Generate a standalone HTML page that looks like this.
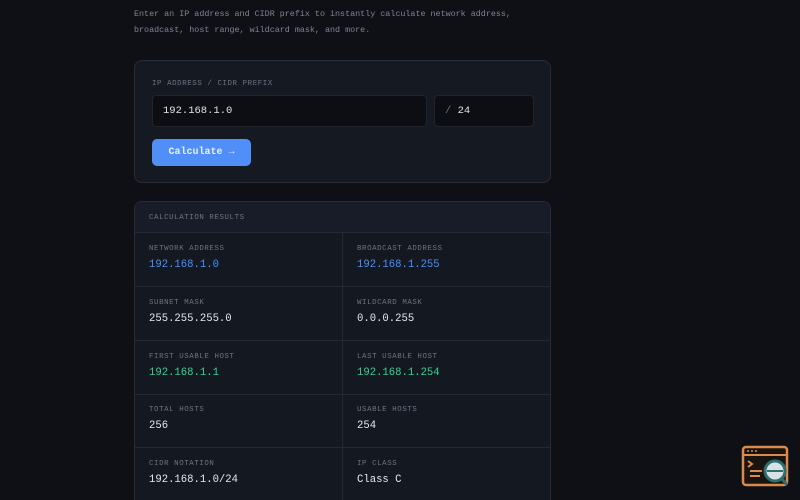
<!DOCTYPE html>
<html style="width:800px;height:500px;overflow:hidden"><head><style>
*{box-sizing:border-box;margin:0;padding:0}
body{width:800px;height:500px;overflow:hidden;background:#0e1016;font-family:"Liberation Mono",monospace;color:#e6e8ee;position:relative}
.desc{position:absolute;left:134px;top:7px;font-size:8.4px;line-height:15.5px;color:#7d8593}
.card{position:absolute;left:134px;top:60px;width:417px;height:123px;background:#151922;border:1px solid #272c37;border-radius:8px}
.lbl{font-size:7.4px;letter-spacing:0.6px;color:#6d7482;text-transform:uppercase}
.in{position:absolute;background:#0c0e13;border:1px solid #20242d;border-radius:4px;font-size:10.5px;color:#e0e3ea;padding-left:10px;line-height:30px;height:32px;top:34px}
.btn{position:absolute;left:17px;top:78px;width:99px;height:27px;background:#4f8ff7;border-radius:5px;color:#eaf1ff;font-size:10px;font-weight:bold;text-align:center;line-height:27px}
.res{position:absolute;left:134px;top:201px;width:417px;height:320px;background:#141820;border:1px solid #272c37;border-radius:8px;overflow:hidden}
.hd{height:31px;background:#171c28;border-bottom:1px solid #232834;padding:12px 0 0 14px}
.cell{position:absolute;width:208px;height:54px;border-bottom:1px solid #232834;padding:12px 0 0 14px}
.cell.r{left:207px;border-left:1px solid #232834}
.v{font-size:10.6px;margin-top:6px;color:#e6e8ee}
.b{color:#4f8ff7}.g{color:#3ccf95}
</style></head><body>
<div class="desc">Enter an IP address and CIDR prefix to instantly calculate network address,<br>broadcast, host range, wildcard mask, and more.</div>
<div class="card">
<div class="lbl" style="position:absolute;left:17px;top:19px">IP Address / CIDR Prefix</div>
<div class="in" style="left:17px;width:275px">192.168.1.0</div>
<div class="in" style="left:299px;width:100px"><span style="color:#6d7482">/</span> 24</div>
<div class="btn">Calculate →</div>
</div>
<div class="res">
<div class="hd lbl">Calculation Results</div>
<div class="cell" style="top:31px"><div class="lbl">Network Address</div><div class="v b">192.168.1.0</div></div>
<div class="cell r" style="top:31px"><div class="lbl">Broadcast Address</div><div class="v b">192.168.1.255</div></div>
<div class="cell" style="top:85px"><div class="lbl">Subnet Mask</div><div class="v">255.255.255.0</div></div>
<div class="cell r" style="top:85px"><div class="lbl">Wildcard Mask</div><div class="v">0.0.0.255</div></div>
<div class="cell" style="top:139px"><div class="lbl">First Usable Host</div><div class="v g">192.168.1.1</div></div>
<div class="cell r" style="top:139px"><div class="lbl">Last Usable Host</div><div class="v g">192.168.1.254</div></div>
<div class="cell" style="top:192px"><div class="lbl">Total Hosts</div><div class="v">256</div></div>
<div class="cell r" style="top:192px"><div class="lbl">Usable Hosts</div><div class="v">254</div></div>
<div class="cell" style="top:246px"><div class="lbl">CIDR Notation</div><div class="v">192.168.1.0/24</div></div>
<div class="cell r" style="top:246px"><div class="lbl">IP Class</div><div class="v">Class C</div></div>
</div>
<svg style="position:absolute;left:740px;top:444px" width="52" height="46" viewBox="0 0 52 46">
<rect x="3" y="3" width="44" height="38" rx="3" fill="#1a1410" stroke="#d98a4c" stroke-width="2.5"/>
<line x1="3" y1="11" x2="47" y2="11" stroke="#d98a4c" stroke-width="2"/>
<circle cx="8" cy="7" r="1" fill="#d98a4c"/><circle cx="12" cy="7" r="1" fill="#d98a4c"/><circle cx="16" cy="7" r="1" fill="#d98a4c"/>
<path d="M8 17l4 3-4 3M10 27h12M10 32h10" stroke="#d98a4c" stroke-width="2" fill="none"/>
<circle cx="35" cy="27" r="10" fill="#d8e2e6" stroke="#2c6f6e" stroke-width="3"/>
<line x1="27" y1="27" x2="43" y2="27" stroke="#2c6f6e" stroke-width="2"/>
<line x1="42" y1="35" x2="47" y2="41" stroke="#2c6f6e" stroke-width="3"/>
</svg>
</body></html>
